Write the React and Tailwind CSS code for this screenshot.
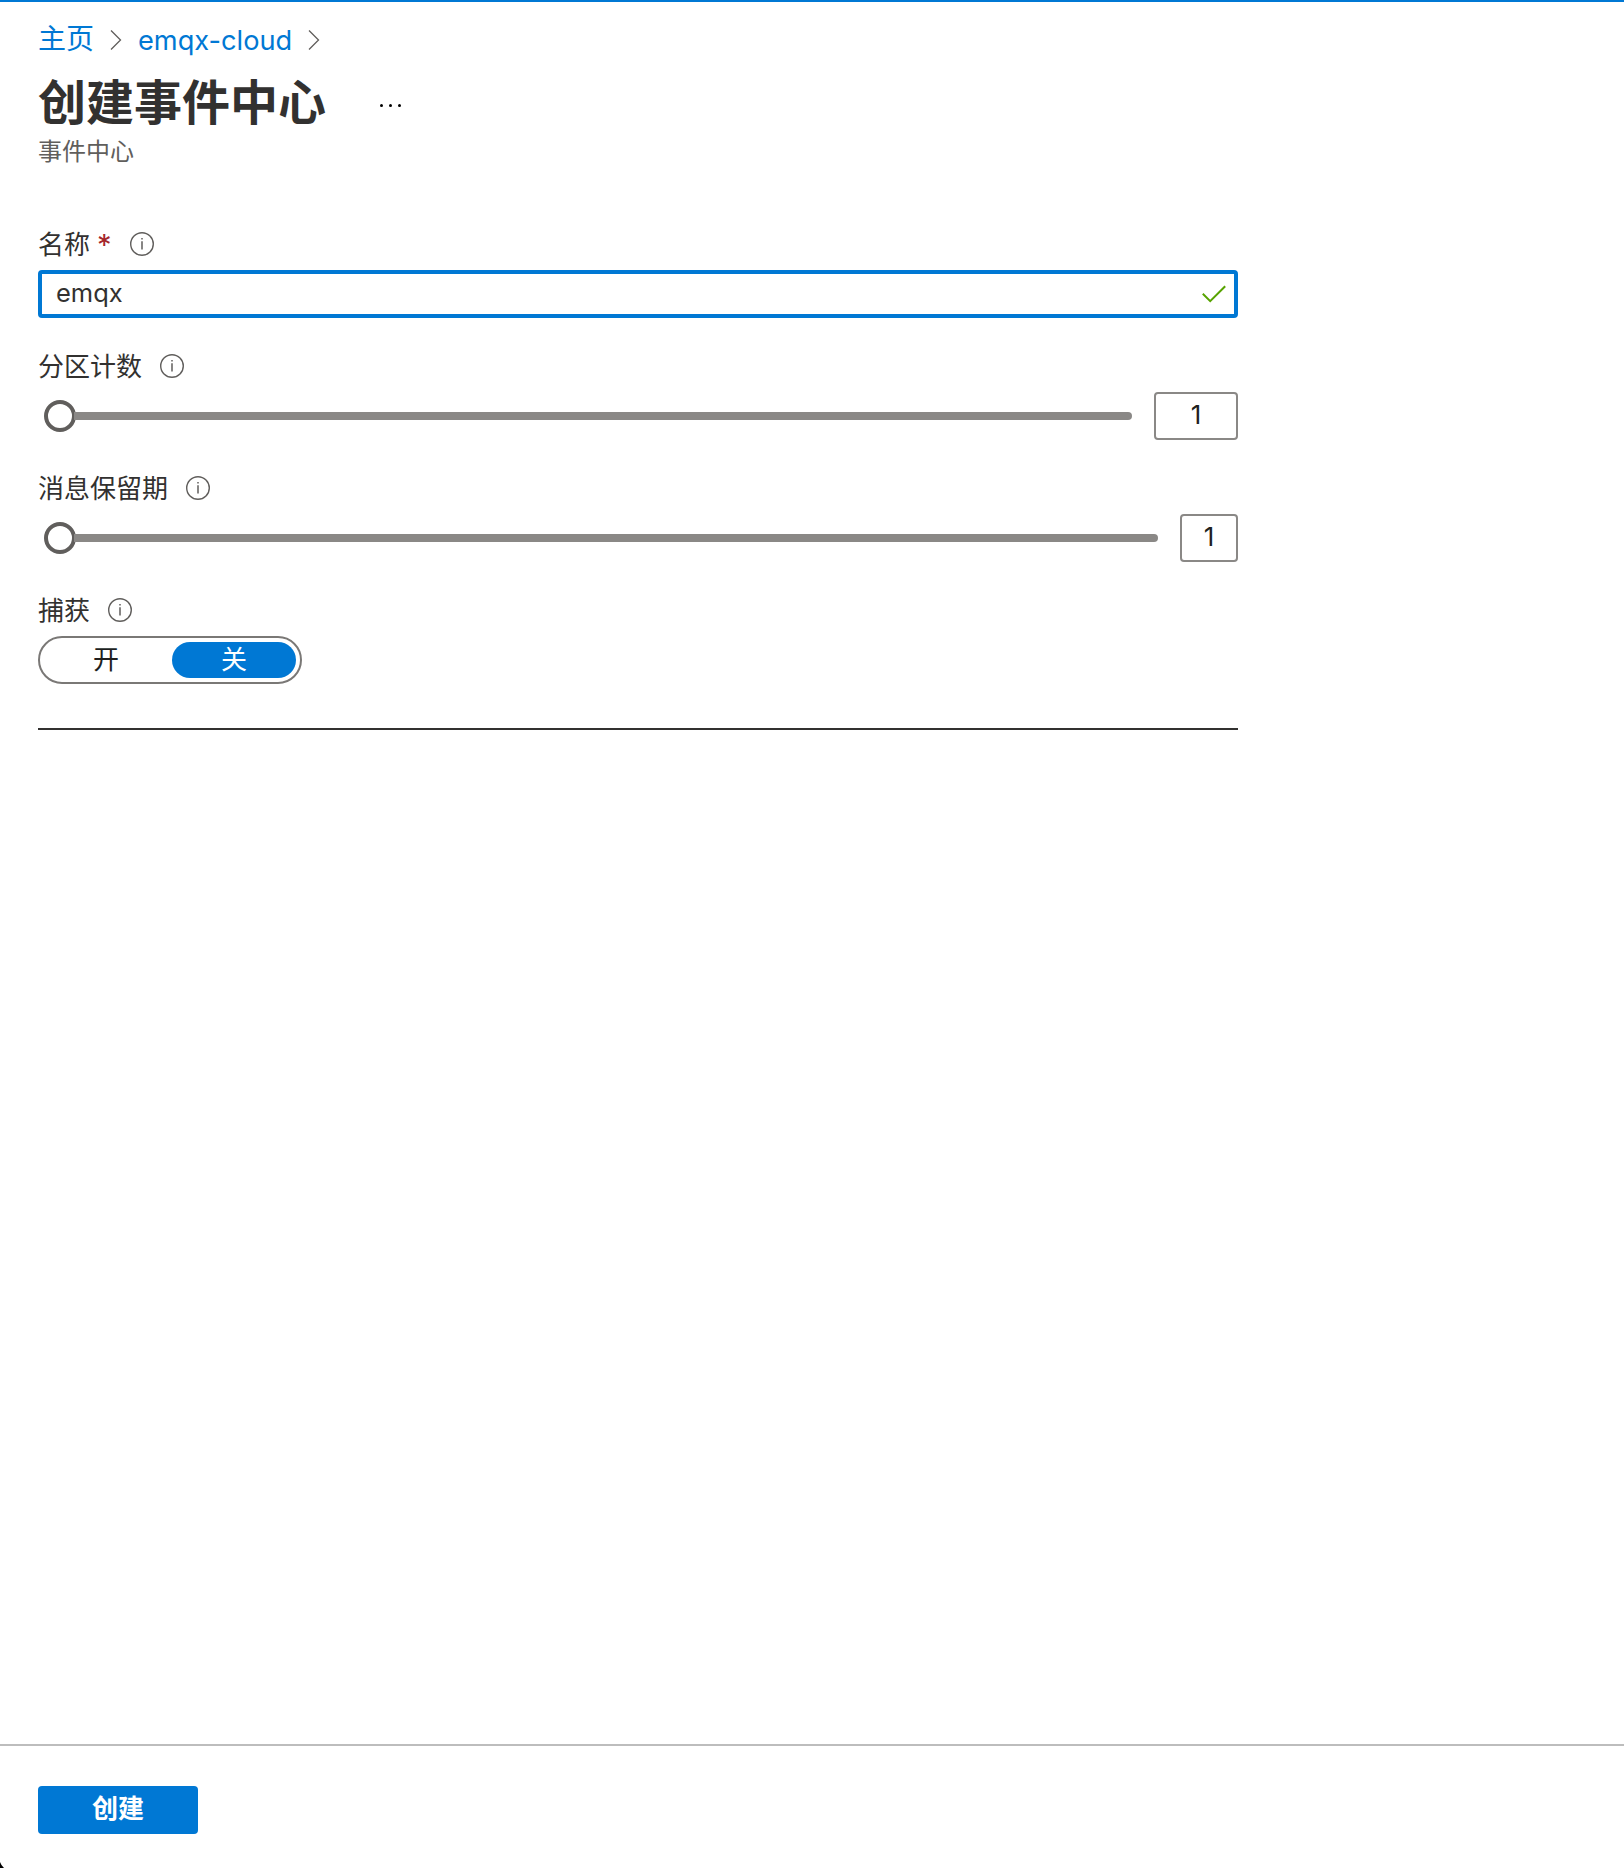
const FONT = "font-['Inter','Noto_Sans_CJK_SC',sans-serif]";

function Chevron({ className }) {
  return (
    <svg className={className} width="12" height="20" viewBox="0 0 12 20" fill="none" stroke="#605e5c" strokeWidth="1.3">
      <path d="M1 0.5 10.5 10 1 19.5" />
    </svg>
  );
}

function InfoIcon({ className }) {
  return (
    <svg className={className} width="24" height="24" viewBox="0 0 24 24" fill="none" stroke="#605e5c">
      <circle cx="12" cy="12" r="11.3" strokeWidth="1.4" />
      <path d="M12 9.3v8.2M12 6v1.6" strokeWidth="1.5" />
    </svg>
  );
}

function Field({ label, required, children }) {
  return (
    <div className="flex flex-col gap-2">
      <div className="flex h-9 items-center text-[26px] leading-9 text-[#323130]">
        <span className="pt-0.5">{label}</span>
        {required && <span className="ml-[7px] w-[13px] pt-0.5 text-[29px] text-[#a4262c]">*</span>}
        <InfoIcon className={required ? "ml-5" : "ml-[18px]"} />
      </div>
      {children}
    </div>
  );
}

function SliderField({ label, value, boxClass }) {
  return (
    <Field label={label}>
      <div className="flex h-12 items-center">
        <div className="ml-1.5 flex flex-1 items-center">
          <div className="size-8 shrink-0 rounded-full border-4 border-[#605e5c] bg-white" />
          <div className="-ml-0.5 h-2 flex-1 rounded-r-full bg-[#8a8886]" />
        </div>
        <div className={`ml-[22px] flex h-12 items-center justify-center rounded-[4px] border-2 border-[#8a8886] pb-[3px] text-[26px] text-[#201f1e] ${boxClass}`}>
          {value}
        </div>
      </div>
    </Field>
  );
}

export default function App() {
  return (
    <div className={`relative flex h-[1868px] w-[1624px] flex-col overflow-hidden border-t-2 border-[#0078d4] bg-white ${FONT}`}>
      <header className="flex flex-col pl-[38px]">
        <nav className="mt-5 flex h-9 items-center text-[27.2px] leading-9 text-[#0078d4]">
          <a className="w-[55px] pb-[3px] text-[28px] whitespace-nowrap">主页</a>
          <Chevron className="ml-[17px]" />
          <a className="ml-4 w-[154px] pt-0.5 whitespace-nowrap">emqx-cloud</a>
          <Chevron className="ml-4" />
        </nav>
        <div className="mt-[13px] flex h-16 items-center">
          <h1 className="text-[48px] leading-[64px] font-bold text-[#323130]">创建事件中心</h1>
          <div className="mt-1 ml-[54px] flex gap-1.5">
            <i className="size-[3px] rounded-full bg-black" />
            <i className="size-[3px] rounded-full bg-black" />
            <i className="size-[3px] rounded-full bg-black" />
          </div>
        </div>
        <p className="mt-px h-8 text-[24px] leading-8 text-[#605e5c]">事件中心</p>
      </header>

      <main className="mt-[58px] ml-[38px] flex w-[1200px] flex-1 flex-col gap-[30px]">
        <Field label="名称" required>
          <div className="flex h-12 items-center justify-between rounded-[4px] border-4 border-[#0078d4] pr-2 pl-3.5 text-[25.5px] text-[#323130]">
            <span className="pb-px">emqx</span>
            <svg width="24" height="18" viewBox="0 0 24 18" fill="none" stroke="#57a300" strokeWidth="2">
              <path d="M0.8 8.8 8.2 16.2 23.2 1.2" />
            </svg>
          </div>
        </Field>
        <SliderField label="分区计数" value="1" boxClass="w-[84px]" />
        <SliderField label="消息保留期" value="1" boxClass="w-[58px]" />
        <Field label="捕获">
          <div className="flex h-12 w-[264px] items-center rounded-full border-2 border-[#7a7876] pr-1 text-[26px] leading-9">
            <div className="flex h-9 flex-1 items-center justify-center pb-px text-[#201f1e]">开</div>
            <div className="flex h-9 w-[124px] items-center justify-center rounded-full bg-[#0078d4] pb-px text-white">关</div>
          </div>
        </Field>
        <hr className="mt-3.5 border-t-2 border-[#323130]" />
      </main>

      <footer className="h-[124px] border-t-2 border-[#bdbdbd] pt-10 pl-[38px]">
        <button className="flex h-12 w-40 items-center justify-center rounded-[4px] bg-[#0078d4] pb-[3px] text-[26px] font-bold text-white">创建</button>
      </footer>
      <svg className="absolute bottom-0 left-0" width="5" height="6" viewBox="0 0 5 6" fill="#000">
        <path d="M0 0Q1.2 3.5 4 6H0Z" />
      </svg>
    </div>
  );
}
